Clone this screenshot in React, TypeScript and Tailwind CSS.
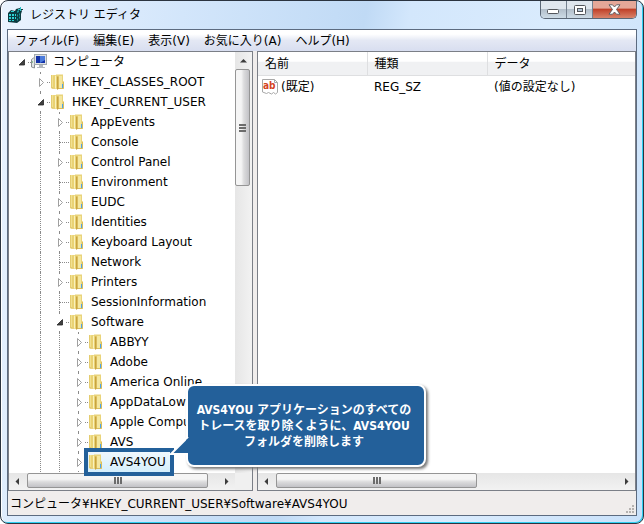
import { clsx } from "clsx";

type TreeItem = {
  name: string;
  depth: number;
  state?: "open" | "closed";
  selected?: boolean;
};

const treeItems: TreeItem[] = [
  { name: "コンピュータ", depth: 0, state: "open" },
  { name: "HKEY_CLASSES_ROOT", depth: 1, state: "closed" },
  { name: "HKEY_CURRENT_USER", depth: 1, state: "open" },
  { name: "AppEvents", depth: 2, state: "closed" },
  { name: "Console", depth: 2 },
  { name: "Control Panel", depth: 2, state: "closed" },
  { name: "Environment", depth: 2 },
  { name: "EUDC", depth: 2, state: "closed" },
  { name: "Identities", depth: 2, state: "closed" },
  { name: "Keyboard Layout", depth: 2, state: "closed" },
  { name: "Network", depth: 2 },
  { name: "Printers", depth: 2, state: "closed" },
  { name: "SessionInformation", depth: 2 },
  { name: "Software", depth: 2, state: "open" },
  { name: "ABBYY", depth: 3, state: "closed" },
  { name: "Adobe", depth: 3, state: "closed" },
  { name: "America Online", depth: 3, state: "closed" },
  { name: "AppDataLow", depth: 3, state: "closed" },
  { name: "Apple Computer", depth: 3, state: "closed" },
  { name: "AVS", depth: 3, state: "closed" },
  { name: "AVS4YOU", depth: 3, state: "closed", selected: true },
];

const menus = ["ファイル(F)", "編集(E)", "表示(V)", "お気に入り(A)", "ヘルプ(H)"];

function RegistryIcon() {
  return (
    <svg width="16" height="16" viewBox="0 0 16 16" className="shrink-0" aria-hidden="true">
      <path d="M0 6l3-3 4 1 1-2 4-1 2 3-1 3v6l-4 3-9-1z" fill="#0b3b40" />
      <path d="M1 7h2v2H1zM4 7h2v2H4zM7 7h1v2H7zM1 10h2v2H1zM4 10h2v2H4zM7 10h1v2H7zM1 13h2v1H1zM4 13h2v1H4zM3 4h3v1H3z" fill="#2fd3d6" />
      <path d="M9 8l1-1v2l-1 1zM11 7l1-1v2l-1 1zM9 12l1-1v2l-1 1zM11 10l1-1v2l-1 1zM9 4l2-1v2l-2 1z" fill="#1b979d" />
      <path d="M12 0h1v2h2v1h-2v2h-1V3h-2V2h2z" fill="#2cc3c8" />
      <path d="M13 2h2v1h-2zM12 4h1v1h-1z" fill="#0b3b40" />
    </svg>
  );
}

function ComputerIcon() {
  return (
    <svg width="16" height="16" viewBox="0 0 16 16" className="shrink-0" aria-hidden="true">
      <path d="M.5 5.500l2-1.500h1v10l-3-1z" fill="#e2e4e6" stroke="#8b9095" />
      <path d="M1 8h1" stroke="#3ba34b" />
      <rect x="3.500" y=".5" width="12" height="10" fill="#dfe2e5" stroke="#a2a9af" />
      <rect x="5" y="2" width="9" height="7" fill="#1231a8" />
      <path d="M9 2h5v4l-5 3z" fill="#4b7bdc" />
      <path d="M8 11h4v2h2v1H6v-1h2z" fill="#b4b9be" />
    </svg>
  );
}

function FolderIcon() {
  return (
    <svg width="16" height="16" viewBox="0 0 16 16" className="shrink-0" aria-hidden="true">
      <path d="M6 1.500V.5h7v6.500l1 .5v7H7z" fill="#ead47a" />
      <path d="M9 2h3v12H9z" fill="#f4e7a0" />
      <path d="M13.500 8v6.500H8" fill="none" stroke="#d9bd5c" />
      <path d="M12 10h1v4h-1z" fill="#4aa5ec" />
      <path d="M1 1h5v13.500H1z" fill="#f2e190" />
      <path d="M1.500 1v13" stroke="#e4cc70" />
      <path d="M2 14h4" stroke="#d4b452" />
      <path d="M3 1.500L5 1l3 1.500V15.500L5.500 14.500H3z" fill="#e9d274" />
      <path d="M5 1.500l1 .5v12.500H5z" fill="#f9f1bd" />
      <path d="M7 2.500h1.500v12L8 15.500H7z" fill="#c9a440" />
    </svg>
  );
}

function StringValueIcon() {
  return (
    <svg width="16" height="16" viewBox="0 0 16 16" className="shrink-0" aria-hidden="true">
      <path d="M.5.500h12l3 3v10l-2 1.500-2-1.500-2 1.500-3-1.500-2 1-4-1.500z" fill="#fff" stroke="#a8a8a8" />
      <path d="M12.500.500v3h3" fill="none" stroke="#a8a8a8" />
      <text x="1" y="10" fontSize="10" fontWeight="700" fill="#d4431e" fontFamily="DejaVu Sans Condensed, sans-serif">ab</text>
    </svg>
  );
}

function Toggle({ item }: { item: TreeItem }) {
  if (!item.state) {
    return (
      <span className="relative h-5 w-[19px] shrink-0">
        <span className="absolute inset-y-0 left-[9px] border-l border-dotted border-[#8a8a8a]" />
        <span className="absolute top-[10px] right-0 left-[9px] border-t border-dotted border-[#8a8a8a]" />
      </span>
    );
  }
  return (
    <button type="button" aria-label={item.name + " toggle"} className="relative h-5 w-[19px] shrink-0">
      {item.depth > 0 && (
        <span className="absolute inset-y-0 left-[9px] border-l border-dotted border-[#8a8a8a]" />
      )}
      <span className="absolute top-[10px] right-0 w-[3px] border-t border-dotted border-[#8a8a8a]" />
      <svg width="9" height="15" viewBox="0 0 9 15" className="absolute top-[3px] left-[6px]">
        <path d="M0 0h9v15H0z" fill="#fff" />
        {item.state === "open" ? (
          <path d="M6.500 4.500V10H1z" fill="#404040" stroke="#262626" strokeWidth=".8" />
        ) : (
          <path d="M2.500 3.500v8l4-4z" fill="#fff" stroke="#a0a0a0" />
        )}
      </svg>
    </button>
  );
}

function TreeRow({ item }: { item: TreeItem }) {
  return (
    <li className="flex h-5 items-center pl-[3px] whitespace-nowrap">
      {Array.from({ length: item.depth }, (_, i) => (
        <span key={i} className="relative h-5 w-[19px] shrink-0">
          {i > 0 && <span className="absolute inset-y-0 left-[9px] border-l border-dotted border-[#8a8a8a]" />}
        </span>
      ))}
      <Toggle item={item} />
      <span
        className={clsx(
          "flex h-5 items-center gap-[6px] pr-1",
          item.selected && "relative z-10 bg-linear-to-b from-[#f0f8fd] to-[#d5effc] outline-4 outline-[#23609a]"
        )}
      >
        {item.depth === 0 ? <ComputerIcon /> : <FolderIcon />}
        {item.name}
      </span>
    </li>
  );
}

function ScrollArrow({ dir }: { dir: "up" | "left" | "right" }) {
  return (
    <button type="button" aria-label={"scroll " + dir} className="flex size-[17px] shrink-0 items-center justify-center">
      <svg width="7" height="7" viewBox="0 0 7 7" fill="#3c3c3c">
        {dir === "up" && <path d="M0 5.500h7L3.500 2z" />}
        {dir === "left" && <path d="M5 0v7L1.500 3.500z" />}
        {dir === "right" && <path d="M2 0v7l3.500-3.500z" />}
      </svg>
    </button>
  );
}

function HorizontalScroll({ thumb }: { thumb: string }) {
  return (
    <div className="flex h-[17px] min-w-0 flex-1 bg-linear-to-b from-[#e6e6e6] to-[#f2f2f2]">
      <ScrollArrow dir="left" />
      <div className="flex-1 pl-px">
        <div
          className={clsx(
            "flex h-[15px] items-center justify-center gap-px rounded-xs border border-[#959595] bg-linear-to-b from-[#f5f5f5] from-40% via-[#dcdcdd] via-60% to-[#c2c2c6]",
            thumb
          )}
        >
          <span className="h-[7px] w-[2px] bg-[#6c6c6c]" />
          <span className="h-[7px] w-[2px] bg-[#6c6c6c]" />
          <span className="h-[7px] w-[2px] bg-[#6c6c6c]" />
        </div>
      </div>
      <ScrollArrow dir="right" />
    </div>
  );
}

function TitleBar() {
  return (
    <header className="flex h-7 items-start justify-between">
      <h1 className="flex h-7 items-center gap-[6px] pl-px">
        <RegistryIcon />
        レジストリ エディタ
      </h1>
      <div className="flex h-[18px] overflow-hidden rounded-b-[5px] border border-t-0 border-[#5a6675]">
        <button type="button" aria-label="最小化" className="flex w-[26px] items-end justify-center border-r border-[#74808f] bg-linear-to-b from-[#dfe6ee] from-45% via-[#b3bfcb] via-50% to-[#cddbe6] pb-[3px]">
          <svg width="13" height="6" viewBox="0 0 13 6">
            <rect x=".5" y=".5" width="11" height="4" rx="1" fill="#fff" stroke="#53565c" />
          </svg>
        </button>
        <button type="button" aria-label="最大化" className="flex w-[26px] items-center justify-center border-r border-[#74808f] bg-linear-to-b from-[#dfe6ee] from-45% via-[#b3bfcb] via-50% to-[#cddbe6]">
          <svg width="12" height="10" viewBox="0 0 12 10">
            <rect x=".5" y=".5" width="11" height="9" rx="1" fill="#fff" stroke="#53565c" />
            <rect x="3.500" y="3.500" width="5" height="3" fill="#b4c6d8" stroke="#53565c" />
          </svg>
        </button>
        <button type="button" aria-label="閉じる" className="flex w-[43px] items-center justify-center bg-linear-to-b from-[#e5a798] from-40% via-[#c0412a] via-50% to-[#d9826a]">
          <svg width="13" height="11" viewBox="0 0 13 11">
            <path d="M1 .8h3.500l2 2.200 2-2.200H12L8.500 5.500l3.500 4.700H8.500l-2-2.200-2 2.200H1l3.500-4.700z" fill="#fff" stroke="#53565c" strokeWidth=".9" />
          </svg>
        </button>
      </div>
    </header>
  );
}

function Callout() {
  return (
    <div role="tooltip" className="absolute top-[333px] left-[178px] z-20 w-60 rounded-[8px] border-2 border-white bg-[#23609a] pt-4 pr-[4px] pb-[15px] text-center font-['DejaVu_Sans_Condensed','Noto_Sans_CJK_JP',sans-serif] leading-4 font-bold text-white shadow-[2px_2px_3px_#777]">
      <svg width="22" height="22" viewBox="0 0 22 22" className="absolute bottom-[7px] -left-[20px]" aria-hidden="true">
        <path d="M20 1L3 18h17" fill="#23609a" stroke="#fff" strokeWidth="2" />
        <path d="M18 4l4-3v16h-4z" fill="#23609a" />
      </svg>
      AVS4YOU アプリケーションのすべての
      <br />
      トレースを取り除くように、AVS4YOU
      <br />
      フォルダを削除します
    </div>
  );
}

export default function App() {
  return (
    <div className="flex min-h-screen flex-col rounded-lg border border-[#2b3440] bg-[linear-gradient(100deg,#eaf3fe_0,#d3e6fb_25%,#c0daf5_50%,#d3e7fc_56%,#d9ebfd_75%,#c9e1fa_100%)] px-[6px] pb-[7px] font-['DejaVu_Sans','Noto_Sans_CJK_JP',sans-serif] text-[12px] leading-5 text-black shadow-[inset_-1px_-1px_0_#2fd0f2,inset_1px_0_0_#fff]">
      <TitleBar />
      <div className="flex flex-1 flex-col border border-[#5c6b80] bg-[#f0edec]">
        <nav className="flex h-[21px] items-center bg-linear-to-b from-white from-20% via-[#e4e8f4] via-50% to-[#d8def0]">
          {menus.map((menu) => (
            <button type="button" key={menu} className="px-[7px]">
              {menu}
            </button>
          ))}
        </nav>
        <main className="relative flex flex-1 gap-1">
          <section className="flex w-[245px] shrink-0 flex-col border border-[#7b7f87] bg-white">
            <div className="flex flex-1">
              <ul className="w-[226px]">
                {treeItems.map((item) => (
                  <TreeRow key={item.name} item={item} />
                ))}
              </ul>
              <div className="flex w-[17px] flex-col bg-linear-to-r from-[#e6e6e6] to-[#f2f2f2]">
                <ScrollArrow dir="up" />
                <div className="flex h-[117px] w-[15px] flex-col items-center justify-center gap-px rounded-xs border border-[#959595] bg-linear-to-r from-[#f5f5f5] from-40% via-[#dcdcdd] via-60% to-[#c2c2c6]">
                  <span className="h-[2px] w-[7px] bg-[#6c6c6c]" />
                  <span className="h-[2px] w-[7px] bg-[#6c6c6c]" />
                  <span className="h-[2px] w-[7px] bg-[#6c6c6c]" />
                </div>
              </div>
            </div>
            <div className="flex">
              <HorizontalScroll thumb="w-[181px]" />
              <span className="w-[17px] bg-[#f0f0f0]" />
            </div>
          </section>
          <section className="flex min-w-0 flex-1 flex-col border border-[#7b7f87] bg-white">
            <table className="w-full table-fixed text-left">
              <thead>
                <tr className="h-[23px] bg-linear-to-b from-white from-40% to-[#f0f1f3] to-45%">
                  <th className="w-[109px] border-r border-b border-[#dedfe1] pt-px pl-[7px] font-normal">名前</th>
                  <th className="w-[120px] border-r border-b border-[#dedfe1] pt-px pl-[7px] font-normal">種類</th>
                  <th className="border-b border-[#dedfe1] pt-px pl-[7px] font-normal">データ</th>
                </tr>
              </thead>
              <tbody>
                <tr className="h-6">
                  <td>
                    <span className="flex items-center gap-[3px] pl-1">
                      <StringValueIcon />
                      (既定)
                    </span>
                  </td>
                  <td className="pl-[7px]">REG_SZ</td>
                  <td className="pl-[7px]">(値の設定なし)</td>
                </tr>
              </tbody>
            </table>
            <div className="mt-auto flex">
              <HorizontalScroll thumb="w-[201px]" />
            </div>
          </section>
          <Callout />
        </main>
        <footer className="flex h-6 items-center justify-between pt-px pl-[2px]">
          <span>コンピュータ¥HKEY_CURRENT_USER¥Software¥AVS4YOU</span>
          <svg width="10" height="10" viewBox="0 0 10 10" fill="#b5b2b0" className="mr-px self-end" aria-hidden="true">
            <path d="M7 0h2v2H7zM7 3h2v2H7zM4 3h2v2H4zM7 6h2v2H7zM4 6h2v2H4zM1 6h2v2H1z" />
          </svg>
        </footer>
      </div>
    </div>
  );
}
